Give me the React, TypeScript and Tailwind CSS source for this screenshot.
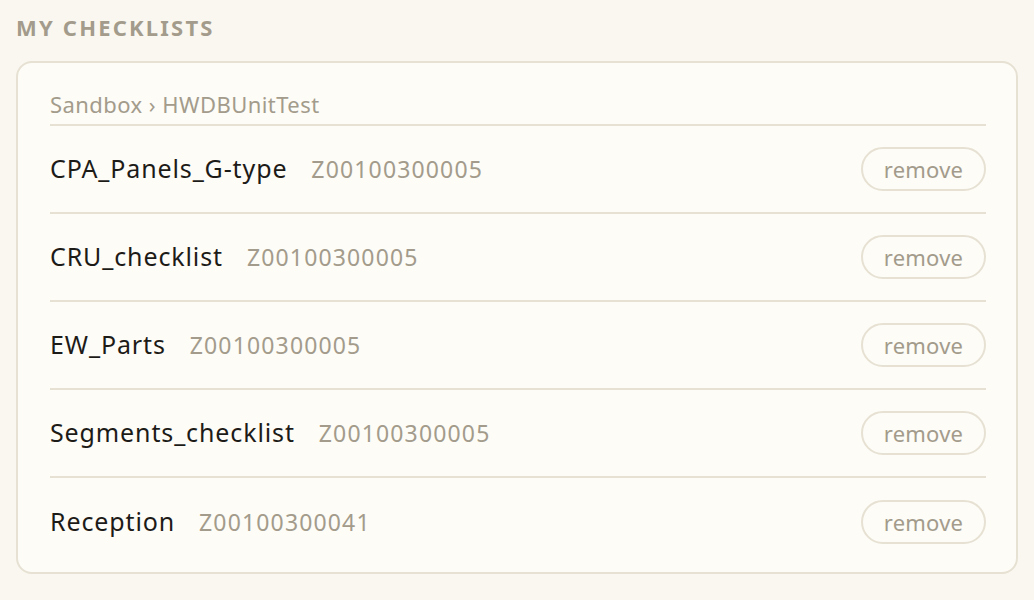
const items = [
  { name: "CPA_Panels_G-type", code: "Z00100300005" },
  { name: "CRU_checklist", code: "Z00100300005" },
  { name: "EW_Parts", code: "Z00100300005" },
  { name: "Segments_checklist", code: "Z00100300005" },
  { name: "Reception", code: "Z00100300041" },
];

export default function App() {
  return (
    <div
      className="min-h-[600px] w-full bg-[#f9f7f0] px-4 pt-[12px]"
      style={{ fontFamily: '"Noto Sans", sans-serif' }}
    >
      <h2 className="text-[22px] leading-[30px] font-bold tracking-[0.1em] text-[#a39b8b]">
        MY CHECKLISTS
      </h2>
      <div className="mt-[19px] rounded-[16px] border-2 border-[#e6e1d2] bg-[#fdfcf7] pl-[32px] pr-[30px] pt-[26px] pb-[6px]">
        <div className="border-b-2 border-[#e6e1d2] pb-[5px] text-[22px] leading-[30px] tracking-[0.02em] text-[#a39b8b]">
          Sandbox › HWDBUnitTest
        </div>
        {items.map((item, i) => (
          <div
            key={item.name}
            className={
              "flex h-[88px] items-center justify-between" +
              (i < items.length - 1 ? " border-b-2 border-[#e6e1d2]" : "")
            }
          >
            <div className="flex items-baseline gap-6">
              <span className="text-[25px] tracking-[0.035em] text-[#1d1b18]">{item.name}</span>
              <span className="text-[23px] tracking-[0.05em] text-[#a39b8b]">{item.code}</span>
            </div>
            <button className="h-[44px] w-[125px] rounded-full border-2 border-[#e6e1d2] text-[22px] tracking-[0.01em] text-[#a39b8b]">
              remove
            </button>
          </div>
        ))}
      </div>
    </div>
  );
}
